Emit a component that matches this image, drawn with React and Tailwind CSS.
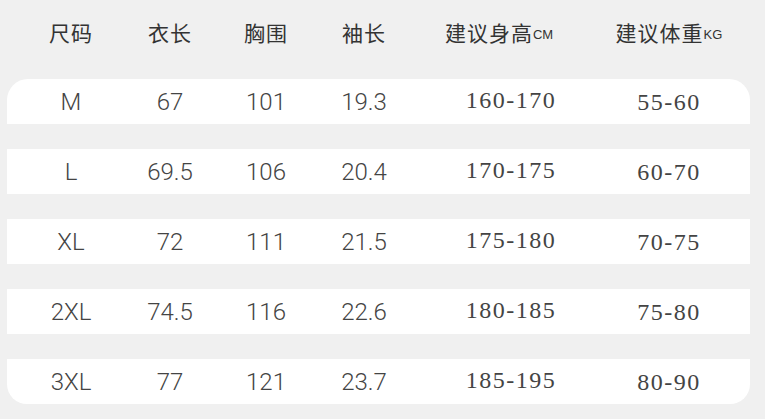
const widths = ["w-[128px]", "w-[70px]", "w-[122px]", "w-[74px]", "w-[220px]", "w-[96px]"];

const rows = [
  ["M", "67", "101", "19.3", "160-170", "55-60"],
  ["L", "69.5", "106", "20.4", "170-175", "60-70"],
  ["XL", "72", "111", "21.5", "175-180", "70-75"],
  ["2XL", "74.5", "116", "22.6", "180-185", "75-80"],
  ["3XL", "77", "121", "23.7", "185-195", "80-90"],
];

const cjk = { fontFamily: '"Noto Sans CJK SC", "Liberation Sans", sans-serif' };

export default function App() {
  return (
    <div className="w-[765px] h-[419px] bg-[#f0f0f0] overflow-hidden px-[7px]">
      {/* header */}
      <div className="h-[66px] flex items-center text-[#333] text-[21px]" style={cjk}>
        <div className={`${widths[0]} flex justify-center whitespace-nowrap tracking-[1px]`}>尺码</div>
        <div className={`${widths[1]} flex justify-center whitespace-nowrap tracking-[1px]`}>衣长</div>
        <div className={`${widths[2]} flex justify-center whitespace-nowrap tracking-[1px]`}>胸围</div>
        <div className={`${widths[3]} flex justify-center whitespace-nowrap tracking-[1px]`}>袖长</div>
        <div className={`${widths[4]} flex justify-center whitespace-nowrap pr-[24px]`}>
          <span className="tracking-[1px]">建议身高</span>
          <span className="text-[13px] self-end mb-[4px] font-['Liberation_Sans',sans-serif]">CM</span>
        </div>
        <div className={`${widths[5]} flex justify-center whitespace-nowrap`}>
          <span className="tracking-[1px]">建议体重</span>
          <span className="text-[13px] self-end mb-[4px] font-['Liberation_Sans',sans-serif]">KG</span>
        </div>
      </div>

      {/* rows */}
      <div className="mt-[13px] flex flex-col gap-[25px] w-[743px]">
        {rows.map((r, i) => (
          <div
            key={r[0]}
            className={`h-[45px] bg-white flex items-center ${i === 0 ? "rounded-t-[21px]" : ""} ${
              i === rows.length - 1 ? "rounded-b-[20px]" : ""
            }`}
          >
            {r.slice(0, 4).map((v, j) => (
              <div
                key={j}
                className={`${widths[j]} flex justify-center whitespace-nowrap text-[24px] font-light text-[#444] font-['Roboto',sans-serif] pt-[1px]`}
              >
                {v}
              </div>
            ))}
            <div className={`${widths[4]} flex justify-center whitespace-nowrap text-[24px] text-[#444] tracking-[1.5px] font-['Liberation_Serif',serif] -mt-[3px]`}>
              {r[4]}
            </div>
            <div className={`${widths[5]} flex justify-center whitespace-nowrap text-[24px] text-[#444] tracking-[1.5px] font-['Liberation_Serif',serif] pt-[1px]`}>
              {r[5]}
            </div>
          </div>
        ))}
      </div>
    </div>
  );
}
